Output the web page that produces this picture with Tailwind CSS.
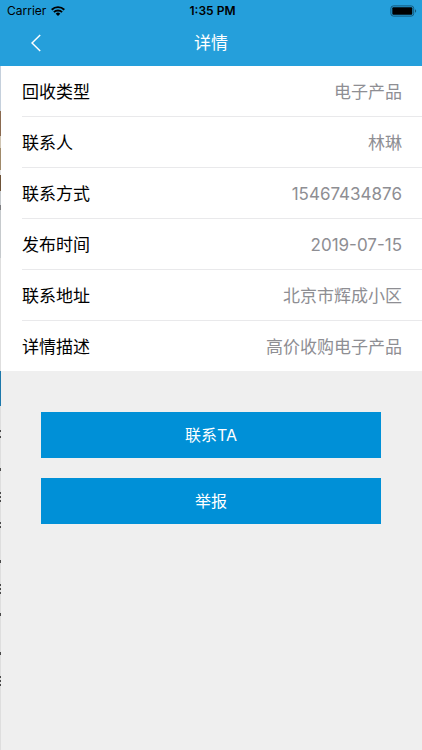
<!DOCTYPE html>
<html lang="zh-CN">
<head>
    <meta charset="UTF-8">
    <meta name="viewport" content="width=device-width, initial-scale=1.0">
    <title>详情</title>
    <script src="https://cdn.jsdelivr.net/npm/@tailwindcss/browser@4"></script>
</head>
<body class="relative min-h-screen bg-[#efefef] font-['Inter','Noto_Sans_CJK_SC',sans-serif] text-[17px] leading-6 text-black">
    <header class="bg-[#259fdb]">
        <!-- 状态栏 -->
        <div class="grid grid-cols-3 items-center h-[22px] pl-[7px] pr-1 text-xs">
            <div class="flex items-center gap-[5px]">
                <span>Carrier</span>
                <svg class="w-[14px] h-[10px]" viewBox="0 0 14 10" fill="none" stroke="#000" stroke-width="1.9">
                    <path d="M.7 3.7a9 9 0 0 1 12.6 0"/>
                    <path d="M2.9 6.1a5.9 5.9 0 0 1 8.2 0"/>
                    <path d="M7 10 4.7 7.7a3.3 3.3 0 0 1 4.6 0z" fill="#000" stroke="none"/>
                </svg>
            </div>
            <span class="text-center font-semibold">1:35 PM</span>
            <svg class="justify-self-end w-[28px] h-[12px]" viewBox="0 0 28 12">
                <rect x=".9" y=".9" width="22.8" height="10.2" rx="2.5" fill="none" stroke="#14587a"/>
                <rect x="2.3" y="2.3" width="20" height="7.4" rx="1" fill="#000"/>
                <path d="M25 4.2c1.6.6 1.6 3 0 3.6z" fill="#14587a"/>
            </svg>
        </div>
        <!-- 导航栏 -->
        <div class="grid grid-cols-3 items-center h-11 pb-[2px] text-white">
            <button type="button" aria-label="返回" class="w-11 pl-[31px]">
                <svg class="w-[10px] h-[18px]" viewBox="0 0 10 18" fill="none" stroke="#fff" stroke-width="1.5">
                    <path d="M9.2 1 1 9l8.2 8"/>
                </svg>
            </button>
            <h1 class="text-center">详情</h1>
        </div>
    </header>

    <main>
        <dl class="bg-white pl-[22px]">
            <div class="flex items-center justify-between h-[51px] pt-px pr-5 border-b border-[#e9e9eb]">
                <dt>回收类型</dt>
                <dd class="text-[#8e8e93]">电子产品</dd>
            </div>
            <div class="flex items-center justify-between h-[51px] pt-px pr-5 border-b border-[#e9e9eb]">
                <dt>联系人</dt>
                <dd class="text-[#8e8e93]">林琳</dd>
            </div>
            <div class="flex items-center justify-between h-[51px] pt-px pr-5 border-b border-[#e9e9eb]">
                <dt>联系方式</dt>
                <dd class="text-[#8e8e93]">15467434876</dd>
            </div>
            <div class="flex items-center justify-between h-[51px] pt-px pr-5 border-b border-[#e9e9eb]">
                <dt>发布时间</dt>
                <dd class="text-[#8e8e93]">2019-07-15</dd>
            </div>
            <div class="flex items-center justify-between h-[51px] pt-px pr-5 border-b border-[#e9e9eb]">
                <dt>联系地址</dt>
                <dd class="text-[#8e8e93]">北京市辉成小区</dd>
            </div>
            <div class="flex items-center justify-between h-[50px] pt-px pr-5">
                <dt>详情描述</dt>
                <dd class="text-[#8e8e93]">高价收购电子产品</dd>
            </div>
        </dl>

        <div class="flex flex-col gap-5 px-[41px] pt-[41px]">
            <button type="button" class="h-[46px] bg-[#0090d7] text-base text-white">联系TA</button>
            <button type="button" class="h-[46px] bg-[#0090d7] text-base text-white">举报</button>
        </div>
    </main>

    <!-- 左侧露出的上一页边缘 -->
    <svg class="absolute left-0 top-[66px] w-px h-[684px]" viewBox="0 0 1 684" preserveAspectRatio="none" shape-rendering="crispEdges" aria-hidden="true">
        <rect width="1" height="684" fill="#dedede"/>
        <rect width="1" height="45" fill="#c5d0dc"/>
        <rect y="45" width="1" height="25" fill="#8a6a50"/>
        <rect y="70" width="1" height="12" fill="#cfc4b2"/>
        <rect y="82" width="1" height="22" fill="#a08a6a"/>
        <rect y="104" width="1" height="5" fill="#e6e6e6"/>
        <rect y="109" width="1" height="16" fill="#6d5238"/>
        <rect y="125" width="1" height="67" fill="#c6cacd"/>
        <rect y="139" width="1" height="5" fill="#7d7d80"/>
        <rect y="305" width="1" height="35" fill="#1c78ab"/>
        <path d="M0 364h1v2H0zM0 370h1v2H0zM0 402h1v3H0zM0 426h1v2H0zM0 430h1v2H0zM0 434h1v2H0zM0 456h1v2H0zM0 460h1v2H0zM0 494h1v3H0zM0 518h1v2H0zM0 522h1v2H0zM0 526h1v2H0zM0 547h1v3H0zM0 586h1v3H0zM0 610h1v2H0zM0 614h1v2H0zM0 618h1v2H0z" fill="#4a4a4a"/>
    </svg>
</body>
</html>
